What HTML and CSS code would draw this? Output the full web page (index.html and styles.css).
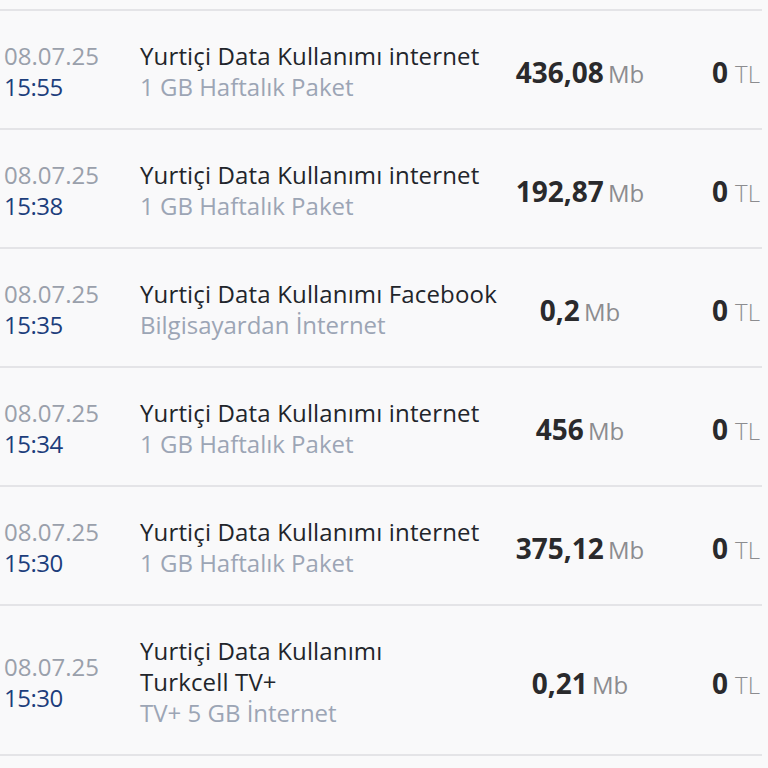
FILE: index.html
```html
<!DOCTYPE html>
<html lang="tr">
<head>
<meta charset="utf-8">
<link rel="stylesheet" href="styles.css">
</head>
<body>
<div class="list">
  <div class="row">
    <div class="when"><span class="date">08.07.25</span><span class="time">15:55</span></div>
    <div class="info"><span class="title">Yurtiçi Data Kullanımı internet</span><span class="sub">1 GB Haftalık Paket</span></div>
    <div class="amount"><b>436,08</b> <span class="unit">Mb</span></div>
    <div class="cost"><b>0</b> <span class="unit tl">TL</span></div>
  </div>
  <div class="row">
    <div class="when"><span class="date">08.07.25</span><span class="time">15:38</span></div>
    <div class="info"><span class="title">Yurtiçi Data Kullanımı internet</span><span class="sub">1 GB Haftalık Paket</span></div>
    <div class="amount"><b>192,87</b> <span class="unit">Mb</span></div>
    <div class="cost"><b>0</b> <span class="unit tl">TL</span></div>
  </div>
  <div class="row">
    <div class="when"><span class="date">08.07.25</span><span class="time">15:35</span></div>
    <div class="info"><span class="title">Yurtiçi Data Kullanımı Facebook</span><span class="sub">Bilgisayardan İnternet</span></div>
    <div class="amount"><b>0,2</b> <span class="unit">Mb</span></div>
    <div class="cost"><b>0</b> <span class="unit tl">TL</span></div>
  </div>
  <div class="row">
    <div class="when"><span class="date">08.07.25</span><span class="time">15:34</span></div>
    <div class="info"><span class="title">Yurtiçi Data Kullanımı internet</span><span class="sub">1 GB Haftalık Paket</span></div>
    <div class="amount"><b>456</b> <span class="unit">Mb</span></div>
    <div class="cost"><b>0</b> <span class="unit tl">TL</span></div>
  </div>
  <div class="row">
    <div class="when"><span class="date">08.07.25</span><span class="time">15:30</span></div>
    <div class="info"><span class="title">Yurtiçi Data Kullanımı internet</span><span class="sub">1 GB Haftalık Paket</span></div>
    <div class="amount"><b>375,12</b> <span class="unit">Mb</span></div>
    <div class="cost"><b>0</b> <span class="unit tl">TL</span></div>
  </div>
  <div class="row">
    <div class="when"><span class="date">08.07.25</span><span class="time">15:30</span></div>
    <div class="info"><span class="title">Yurtiçi Data Kullanımı <span class="nowrap">Turkcell TV+</span></span><span class="sub">TV+ 5 GB İnternet</span></div>
    <div class="amount"><b>0,21</b> <span class="unit">Mb</span></div>
    <div class="cost"><b>0</b> <span class="unit tl">TL</span></div>
  </div>
</div>
</body>
</html>
```

FILE: styles.css
```css
html, body {
  margin: 0;
  padding: 0;
  background: #f9f9fa;
  font-family: "Open Sans", "Noto Sans", sans-serif;
}
.list {
  margin: 9px 6px 0 0;
  border-top: 2px solid #e4e4e7;
}
.row {
  display: grid;
  grid-template-columns: 136px 370px 140px 1fr;
  align-items: center;
  padding: 29px 2px 26px 4px;
  border-bottom: 2px solid #e4e4e7;
  line-height: 31px;
}
.when, .info {
  display: flex;
  flex-direction: column;
}
.date {
  font-size: 24px;
  color: #9aa0ab;
}
.time {
  font-size: 24px;
  color: #1d3e7c;
  letter-spacing: -0.5px;
}
.title {
  font-size: 24px;
  color: #22252b;
  letter-spacing: 0.15px;
}
.nowrap {
  white-space: nowrap;
}
.sub {
  font-size: 24px;
  color: #9ca5b5;
}
.amount {
  text-align: center;
  white-space: nowrap;
  padding-top: 8px;
}
.cost {
  text-align: right;
  white-space: nowrap;
  padding-top: 8px;
}
b {
  font-size: 28px;
  font-weight: 700;
  color: #2a2a2c;
}
.unit {
  font-size: 24px;
  color: #8c8c8f;
}
.tl {
  font-weight: 300;
  margin-left: 3px;
}
```
